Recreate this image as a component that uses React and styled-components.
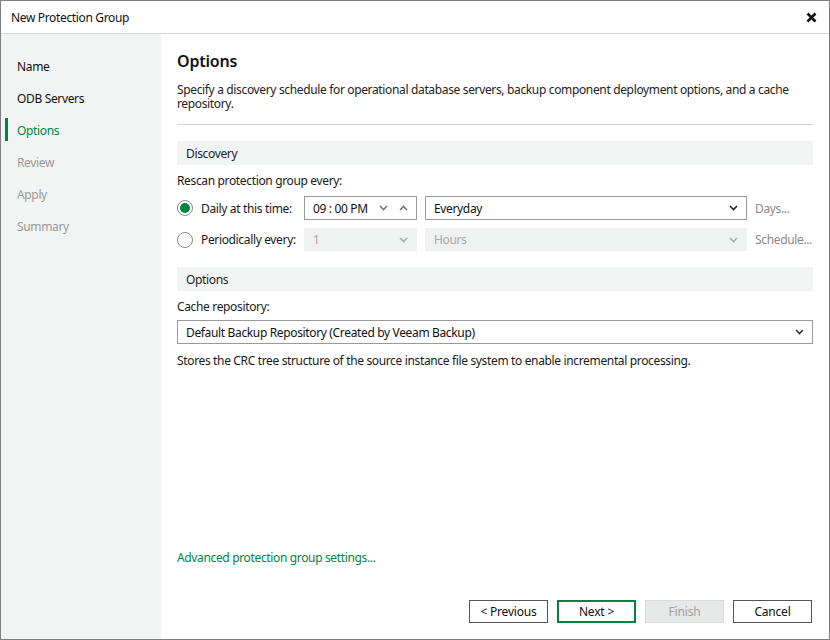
import React from "react";
import styled, { createGlobalStyle } from "styled-components";

const Global = createGlobalStyle`
  html, body { margin: 0; padding: 0; background: #fff; }
  body { font-family: "Noto Sans", "Open Sans", sans-serif; font-size: 12px; letter-spacing: -0.35px; color: #1a1a1a; }
  * { box-sizing: border-box; }
`;

const GREEN = "#00853e";

const Window = styled.div`
  width: 830px;
  height: 640px;
  border: 1px solid #7f7f7f;
  display: flex;
  flex-direction: column;
  background: #fff;
`;

const TitleBar = styled.div`
  height: 33px;
  flex: none;
  display: flex;
  align-items: center;
  justify-content: space-between;
  padding: 0 12px 0 10px;
  border-bottom: 1px solid #d6d6d6;
  font-size: 12px;
  color: #111;
`;

const Body = styled.div`
  flex: 1;
  display: flex;
  min-height: 0;
`;

const Sidebar = styled.nav`
  width: 160px;
  flex: none;
  background: #f2f3f3;
  padding-top: 16px;
  display: flex;
  flex-direction: column;
`;

const NavItem = styled.div`
  position: relative;
  height: 32px;
  display: flex;
  align-items: center;
  padding-left: 16px;
  font-size: 12px;
  color: ${(p) => (p.$state === "active" ? GREEN : p.$state === "disabled" ? "#9a9a9a" : "#111")};
  &::before {
    content: "";
    display: ${(p) => (p.$state === "active" ? "block" : "none")};
    position: absolute;
    left: 4px;
    top: 4px;
    bottom: 5px;
    width: 3px;
    background: ${GREEN};
  }
`;

const Main = styled.main`
  flex: 1;
  display: flex;
  flex-direction: column;
  padding: 16px 16px 16px 16px;
  min-width: 0;
`;

const Heading = styled.h1`
  margin: 0;
  font-size: 16px;
  font-weight: 600;
  line-height: 22px;
  letter-spacing: -0.2px;
  color: #111;
`;

const Description = styled.p`
  margin: 11px 0 0;
  font-size: 12px;
  line-height: 14px;
  color: #222;
  padding-bottom: 13px;
  border-bottom: 1px solid #d3d3d3;
`;

const SectionHeader = styled.div`
  margin-top: ${(p) => p.$mt || 16}px;
  height: 24px;
  display: flex;
  align-items: center;
  padding-left: 9px;
  background: #f2f3f3;
  color: #222;
`;

const Label = styled.div`
  margin-top: ${(p) => p.$mt || 0}px;
  line-height: 16px;
  color: #1a1a1a;
`;

const ScheduleGrid = styled.div`
  margin-top: 7px;
  display: grid;
  grid-template-columns: 119px 113px 1fr 58px;
  column-gap: 8px;
  row-gap: 8px;
  align-items: center;
`;

const RadioLabel = styled.label`
  display: flex;
  align-items: center;
  gap: 8px;
  white-space: nowrap;
  color: #1a1a1a;
`;

const RadioCircle = styled.span`
  width: 16px;
  height: 16px;
  border-radius: 50%;
  border: 1px solid #8d8d8d;
  display: flex;
  align-items: center;
  justify-content: center;
  flex: none;
  &::after {
    content: "";
    display: ${(p) => (p.$checked ? "block" : "none")};
    width: 10px;
    height: 10px;
    border-radius: 50%;
    background: ${GREEN};
  }
`;

const Field = styled.div`
  height: ${(p) => (p.$disabled ? 23 : 24)}px;
  margin-top: ${(p) => p.$mt || 0}px;
  display: flex;
  align-items: center;
  padding: 0 8px 0 8px;
  border: 1px solid ${(p) => (p.$disabled ? "#f0f1f1" : "#9a9a9a")};
  background: ${(p) => (p.$disabled ? "#f0f1f1" : "#fff")};
  color: ${(p) => (p.$disabled ? "#a8a8a8" : "#111")};
  gap: ${(p) => p.$gap || 8}px;
`;

const FieldText = styled.span`
  flex: 1;
  white-space: nowrap;
`;

const SideLink = styled.span`
  color: #8a8a8a;
  white-space: nowrap;
`;

const HelpText = styled.div`
  margin-top: 9px;
  color: #1a1a1a;
  line-height: 16px;
`;

const Spacer = styled.div`
  flex: 1;
`;

const AdvLink = styled.a`
  color: ${GREEN};
  text-decoration: none;
  line-height: 16px;
`;

const Footer = styled.div`
  margin-top: 34px;
  display: flex;
  justify-content: flex-end;
  gap: 9px;
  padding-right: 1px;
`;

const Button = styled.button`
  width: 79px;
  height: 23px;
  font-family: inherit;
  font-size: 12px;
  letter-spacing: -0.2px;
  padding: 0;
  background: ${(p) => (p.$disabled ? "#e7e8e8" : "#fff")};
  color: ${(p) => (p.$disabled ? "#a0a0a0" : "#111")};
  border: ${(p) => (p.$primary ? `2px solid ${GREEN}` : p.$disabled ? "1px solid #dcdcdc" : "1px solid #555")};
`;

const Chevron = ({ up, color = "#333" }) => (
  <svg width="9" height="6" viewBox="0 0 9 6" style={{ flex: "none" }}>
    <path
      d={up ? "M1 5 L4.5 1.5 L8 5" : "M1 1 L4.5 4.5 L8 1"}
      fill="none"
      stroke={color}
      strokeWidth="1.6"
    />
  </svg>
);

const CloseIcon = () => (
  <svg width="11" height="11" viewBox="0 0 11 11">
    <path d="M1.5 1.5 L9.5 9.5 M9.5 1.5 L1.5 9.5" stroke="#111" strokeWidth="2.6" />
  </svg>
);

const steps = [
  ["Name", "done"],
  ["ODB Servers", "done"],
  ["Options", "active"],
  ["Review", "disabled"],
  ["Apply", "disabled"],
  ["Summary", "disabled"],
];

export default function App() {
  return (
    <>
      <Global />
      <Window>
        <TitleBar>
          <span>New Protection Group</span>
          <CloseIcon />
        </TitleBar>
        <Body>
          <Sidebar>
            {steps.map(([name, state]) => (
              <NavItem key={name} $state={state}>
                {name}
              </NavItem>
            ))}
          </Sidebar>
          <Main>
            <Heading>Options</Heading>
            <Description>
              Specify a discovery schedule for operational database servers, backup component deployment options, and a cache repository.
            </Description>
            <SectionHeader $mt={16}>Discovery</SectionHeader>
            <Label $mt={8}>Rescan protection group every:</Label>
            <ScheduleGrid>
              <RadioLabel>
                <RadioCircle $checked />
                Daily at this time:
              </RadioLabel>
              <Field $gap={11}>
                <FieldText>09 : 00 PM</FieldText>
                <Chevron color="#777" />
                <Chevron up color="#777" />
                <span style={{ width: 0 }} />
              </Field>
              <Field>
                <FieldText>Everyday</FieldText>
                <Chevron color="#222" />
              </Field>
              <SideLink>Days...</SideLink>

              <RadioLabel>
                <RadioCircle />
                Periodically every:
              </RadioLabel>
              <Field $disabled>
                <FieldText>1</FieldText>
                <Chevron color="#aaa" />
              </Field>
              <Field $disabled>
                <FieldText>Hours</FieldText>
                <Chevron color="#aaa" />
              </Field>
              <SideLink>Schedule...</SideLink>
            </ScheduleGrid>
            <SectionHeader $mt={16}>Options</SectionHeader>
            <Label $mt={8}>Cache repository:</Label>
            <Field $mt={5}>
              <FieldText>Default Backup Repository (Created by Veeam Backup)</FieldText>
              <Chevron color="#333" />
            </Field>
            <HelpText>
              Stores the CRC tree structure of the source instance file system to enable incremental processing.
            </HelpText>
            <Spacer />
            <AdvLink href="#">Advanced protection group settings...</AdvLink>
            <Footer>
              <Button>&lt; Previous</Button>
              <Button $primary>Next &gt;</Button>
              <Button $disabled>Finish</Button>
              <Button>Cancel</Button>
            </Footer>
          </Main>
        </Body>
      </Window>
    </>
  );
}
